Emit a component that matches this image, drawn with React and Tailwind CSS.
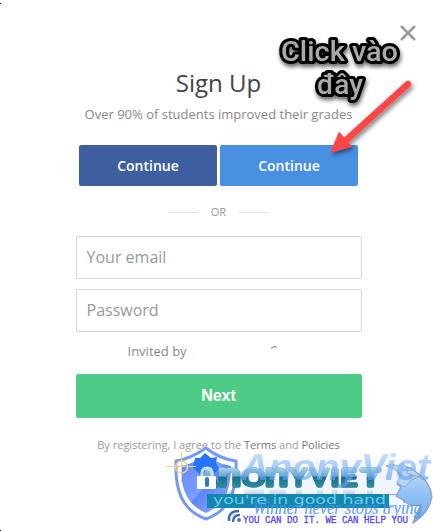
const Field = ({ label, type }) => (
  <input
    type={type}
    placeholder={label}
    className="block h-[43px] w-[286px] rounded-[2px] border border-[#d5d7d8] bg-white px-[10px] pb-[2px] text-[16px] text-[#777] placeholder:text-[#999] outline-none"
  />
);

const wordmark = [
  { glyph: 'A', x: 201, width: 16, size: 23 },
  { glyph: 'n', x: 218, width: 23, size: 31 },
  { glyph: 'O', x: 242, width: 23, size: 23 },
  { glyph: 'n', x: 265, width: 23, size: 31 },
  { glyph: 'Y', x: 290, width: 17, size: 23 },
  { glyph: 'V', x: 311, width: 17, size: 23 },
  { glyph: 'I', x: 331, width: 8, size: 23 },
  { glyph: 'E', x: 341, width: 16, size: 23 },
  { glyph: 'T', x: 361, width: 19, size: 23 },
];

const Annotation = () => (
  <svg className="pointer-events-none absolute left-0 top-0" width="437" height="531" viewBox="0 0 437 531">
    <defs>
      <filter id="shadow" x="-20%" y="-20%" width="150%" height="150%">
        <feDropShadow dx="1" dy="3" stdDeviation="2" floodColor="#000" floodOpacity=".6" />
      </filter>
      <filter id="arrowShadow" x="-20%" y="-20%" width="150%" height="150%">
        <feDropShadow dx="2" dy="3" stdDeviation="2" floodColor="#000" floodOpacity=".45" />
      </filter>
    </defs>
    <g
      filter="url(#shadow)"
      fontFamily="Roboto, 'Liberation Sans', sans-serif"
      fontSize="27"
      fontWeight="500"
      fill="#aaa"
      stroke="#000"
      strokeWidth="6"
      strokeLinejoin="round"
      paintOrder="stroke"
    >
      <text x="281" y="61" textLength="117" lengthAdjust="spacingAndGlyphs">Click vào</text>
      <text x="317" y="94" textLength="46" lengthAdjust="spacingAndGlyphs">đây</text>
    </g>
    <g filter="url(#arrowShadow)" fill="#ff4545">
      <path d="M408 84 343 143" stroke="#ff4545" strokeWidth="6.500" strokeLinecap="round" />
      <path d="M330 153 339 131.500 352 146.500Z" />
    </g>
  </svg>
);

const Watermark = () => (
  <svg className="pointer-events-none absolute left-0 top-0" width="437" height="531" viewBox="0 0 437 531">
    <defs>
      <linearGradient id="letters" gradientUnits="userSpaceOnUse" x1="0" y1="466" x2="0" y2="488">
        <stop offset="0" stopColor="#b5dded" />
        <stop offset=".45" stopColor="#69acc9" />
        <stop offset=".52" stopColor="#176f92" />
        <stop offset="1" stopColor="#2f9399" />
      </linearGradient>
      <linearGradient id="script" gradientUnits="userSpaceOnUse" x1="0" y1="454" x2="0" y2="490">
        <stop offset="0" stopColor="#a4cdf8" />
        <stop offset=".4" stopColor="#7fb2f1" />
        <stop offset="1" stopColor="#4f8deb" />
      </linearGradient>
      <linearGradient id="shield" x1="0" y1="0" x2="1" y2="1">
        <stop offset="0" stopColor="#5d86ff" />
        <stop offset=".5" stopColor="#7d9dff" />
        <stop offset=".52" stopColor="#5b86f7" />
        <stop offset="1" stopColor="#9cb5ff" />
      </linearGradient>
      <linearGradient id="globe" x1="0" y1="0" x2="0" y2="1">
        <stop offset="0" stopColor="#c1dcf8" />
        <stop offset=".5" stopColor="#8fc1f4" />
        <stop offset="1" stopColor="#72acef" />
      </linearGradient>
      <linearGradient id="reflection" x1="0" y1="0" x2="0" y2="1">
        <stop offset="0" stopColor="#6d9cae" stopOpacity=".05" />
        <stop offset="1" stopColor="#537f98" stopOpacity=".3" />
      </linearGradient>
      <filter id="soft" x="-20%" y="-30%" width="140%" height="160%">
        <feGaussianBlur stdDeviation="4" />
      </filter>
      <filter id="rim" x="-5%" y="-10%" width="110%" height="120%">
        <feDropShadow dx="0" dy="0" stdDeviation=".6" floodColor="#123f68" floodOpacity="1" />
      </filter>
    </defs>
    <path d="M242 461H422V514H245Z" fill="#c7dbff" opacity=".25" filter="url(#soft)" />
    <path d="M206 448Q190 459 176 461C175 489 181 510 206 519 231 510 237 489 236 461 222 459 212 453 206 448Z" fill="#fff" stroke="#7798fb" strokeWidth="3" />
    <path d="M206 455Q193 464 181 466C181 488 186 504 206 513 226 504 231 488 231 466 219 464 212 459 206 455Z" fill="url(#shield)" />
    <path d="M205 453 211 458 217 457 216 463 219 469 213 475 199 474 193 467 195 458 200 458Z" fill="#2374ff" />
    <g stroke="#efd28c" strokeWidth="1" fill="none">
      <circle cx="181.500" cy="467" r="6" strokeWidth="1.500" />
      <path d="M181.500 451V482M166 466.500H196" />
    </g>
    <path d="M220 489H234V494H220ZM244 489H264V494H244ZM269 489H286V494H269ZM296 489H302V494H296ZM317 489H323V494H317ZM332 489H338V494H332ZM343 489H355V494H343ZM367 489H373V494H367Z" fill="url(#reflection)" />
    <text
      fontFamily="'Liberation Sans', sans-serif"
      fill="url(#letters)"
      stroke="url(#letters)"
      strokeWidth="3.200"
      strokeLinejoin="round"
      strokeLinecap="round"
      filter="url(#rim)"
    >
      {wordmark.map(({ glyph, x, width, size }) => (
        <tspan key={x} x={x} y="485.500" fontSize={size} textLength={width} lengthAdjust="spacingAndGlyphs">
          {glyph}
        </tspan>
      ))}
    </text>
    <path d="M202 477V473Q202 468 207 468T212 473V477" fill="none" stroke="#c7e1fa" strokeWidth="3" />
    <rect x="197" y="476" width="19" height="13" rx="1" fill="#fff" />
    <path d="M207 479V485" stroke="#267eb4" strokeWidth="4" strokeLinecap="round" />
    <rect x="207" y="494" width="182" height="14" fill="#1586ad" />
    <text x="213" y="504" fontFamily="'DejaVu Sans', sans-serif" fontSize="12" fill="#68cdf5" textLength="173" lengthAdjust="spacingAndGlyphs">you're in good hand</text>
    <path d="M389 494.500H421" stroke="#4c88e6" opacity=".7" />
    <path d="M397 471Q407 463 416 472 430 481 432 497 429 513 413 523 417 511 421 505 408 507 405 501L396 496 401 487 397 484 404 479Z" fill="url(#globe)" stroke="#8c9fba" strokeWidth="1.200" />
    <path d="M386 466 392 464 398 466 402 463 407 467 407 473 413 476 421 476 411 480 405 487 397 483 401 474 394 469Z" fill="#b5d6f6" stroke="#8a9db8" strokeWidth=".8" />
    <text
      x="241"
      y="480"
      fontFamily="'Liberation Sans', sans-serif"
      fontSize="36"
      fontWeight="bold"
      fontStyle="italic"
      fill="url(#script)"
      opacity=".65"
      textLength="189"
      lengthAdjust="spacingAndGlyphs"
    >
      AnonyViet
    </text>
    <text
      x="253"
      y="514"
      fontFamily="'Liberation Serif', serif"
      fontSize="18"
      fontStyle="italic"
      fill="#4990ee"
      stroke="#4990ee"
      strokeWidth=".2"
      opacity=".8"
      textLength="169"
      lengthAdjust="spacingAndGlyphs"
    >
      Winner never stops trying
    </text>
    <g fill="none" stroke="#386eb0" strokeWidth="2.400">
      <path d="M229 521Q228 511 239 511M233 522Q233 515 240 515" />
      <circle cx="239" cy="520" r=".7" fill="#386eb0" />
    </g>
    <text x="243" y="523" fontFamily="'Liberation Mono', monospace" fontSize="11" fill="#5b48e9" stroke="#5b48e9" strokeWidth=".35" textLength="165" lengthAdjust="spacingAndGlyphs">YOU CAN DO IT. WE CAN HELP YOU</text>
  </svg>
);

export default function App() {
  return (
    <main className="relative flex h-[531px] w-[437px] flex-col items-center overflow-hidden bg-white font-['Open_Sans',sans-serif] text-[#888]">
      <button aria-label="Close" className="mr-[21px] mt-[25px] self-end text-[#999]">
        <svg width="16" height="16" viewBox="0 0 16 16" fill="none" stroke="currentColor" strokeWidth="2.500">
          <path d="m1 1 14 14M15 1 1 15" />
        </svg>
      </button>
      <h1 className="mt-[25px] h-[34px] text-[24px] leading-[34px] text-[#444]">Sign Up</h1>
      <p className="mt-[5px] h-[18px] whitespace-nowrap text-[13px] leading-[18px]">Over 90% of students improved their grades</p>
      <div className="mt-[22px] flex gap-[3px] text-[14px] font-semibold text-white">
        <button className="h-[41px] w-[138px] rounded-[2px] bg-[#3e5f9f]">Continue</button>
        <button className="h-[41px] w-[138px] rounded-[2px] bg-[#4a90e2]">Continue</button>
      </div>
      <div className="mt-[18px] flex h-4 items-center gap-[12.5px] text-[11px] leading-4 text-[#999]">
        <span className="h-px w-[30px] bg-[#e2e2e2]" />
        OR
        <span className="h-px w-[30px] bg-[#e2e2e2]" />
      </div>
      <form className="mt-4 flex flex-col gap-[10px]">
        <Field label="Your email" type="email" />
        <Field label="Password" type="password" />
      </form>
      <div className="mt-[10px] flex h-[18px] w-[182px] items-start text-[13px] leading-[18px]">
        <span className="whitespace-nowrap">Invited by</span>
        <span className="ml-[6px] mt-[12px] size-px bg-[#edd29c]" />
        <svg className="ml-[77px] mt-[4px]" width="7" height="3" fill="none" stroke="#777">
          <path d="M0 2Q3 0 6 1" />
        </svg>
      </div>
      <button className="mt-[14px] h-11 w-[286px] rounded-[2px] bg-[#4ecb84] font-['Liberation_Sans',sans-serif] text-[16px] font-bold text-white">Next</button>
      <p className="mt-[19px] whitespace-nowrap text-[11px] leading-4 text-[#999]">
        By registering, I agree to the <span className="text-[#777]">Terms</span> and <span className="text-[#777]">Policies</span>
      </p>
      <Annotation />
      <Watermark />
      <span className="absolute left-0 top-[3px] h-px w-px bg-black" />
      <span className="absolute bottom-0 left-0 h-px w-px bg-black" />
    </main>
  );
}
